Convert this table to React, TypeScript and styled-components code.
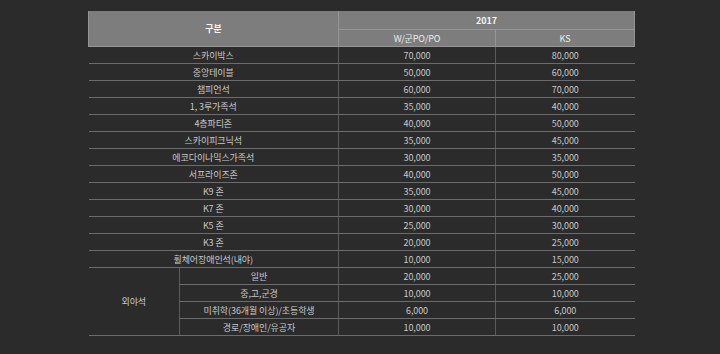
import styled, { createGlobalStyle } from 'styled-components';

const GlobalStyle = createGlobalStyle`
  html,
  body {
    margin: 0;
    padding: 0;
    background: #2b2b2b;
  }
`;

const Page = styled.div`
  width: 720px;
  height: 354px;
  padding: 11px 0 0 88px;
  box-sizing: border-box;
  background: #2b2b2b;
  font-family: 'Noto Sans CJK KR', 'Noto Sans', sans-serif;
`;

const PriceTable = styled.table`
  width: 546px;
  border-collapse: collapse;
  table-layout: fixed;
  font-size: 9px;
  line-height: 1;
  letter-spacing: -0.1px;
`;

const Head = styled.th<{ $h: number }>`
  height: ${({ $h }) => $h}px;
  padding: 0;
  background: #7d7d7d;
  color: #f4f4f4;
  font-weight: 700;
  text-align: center;
  border: 1px solid #959595;
  border-top: none;
`;

const SubHead = styled(Head)`
  font-weight: 400;
  color: #ececec;
`;

const Row = styled.tr`
  height: 17px;
`;

const Cell = styled.td`
  padding: 0;
  color: #c8c8c8;
  text-align: center;
  border-bottom: 1px solid #6c6c6c;
  border-left: 1px solid #5a5a5a;

  &:first-child {
    border-left: none;
  }
`;

type Price = [string, string, string];

const rows: Price[] = [
  ['스카이박스', '70,000', '80,000'],
  ['중앙테이블', '50,000', '60,000'],
  ['챔피언석', '60,000', '70,000'],
  ['1, 3루가족석', '35,000', '40,000'],
  ['4층파티존', '40,000', '50,000'],
  ['스카이피크닉석', '35,000', '45,000'],
  ['에코다이나믹스가족석', '30,000', '35,000'],
  ['서프라이즈존', '40,000', '50,000'],
  ['K9 존', '35,000', '45,000'],
  ['K7 존', '30,000', '40,000'],
  ['K5 존', '25,000', '30,000'],
  ['K3 존', '20,000', '25,000'],
  ['휠체어장애인석(내야)', '10,000', '15,000'],
];

const outfield: Price[] = [
  ['일반', '20,000', '25,000'],
  ['중,고,군경', '10,000', '10,000'],
  ['미취학(36개월 이상)/초등학생', '6,000', '6,000'],
  ['경로/장애인/유공자', '10,000', '10,000'],
];

export default function App() {
  return (
    <Page>
      <GlobalStyle />
      <PriceTable>
        <colgroup>
          <col style={{ width: 91 }} />
          <col style={{ width: 159 }} />
          <col style={{ width: 157 }} />
          <col style={{ width: 139 }} />
        </colgroup>
        <thead>
          <tr>
            <Head $h={18} colSpan={2} rowSpan={2}>
              구분
            </Head>
            <Head $h={18} colSpan={2}>
              2017
            </Head>
          </tr>
          <tr>
            <SubHead $h={16}>W/군PO/PO</SubHead>
            <SubHead $h={16}>KS</SubHead>
          </tr>
        </thead>
        <tbody>
          {rows.map(([name, a, b]) => (
            <Row key={name}>
              <Cell colSpan={2}>{name}</Cell>
              <Cell>{a}</Cell>
              <Cell>{b}</Cell>
            </Row>
          ))}
          {outfield.map(([name, a, b], i) => (
            <Row key={name}>
              {i === 0 && <Cell rowSpan={outfield.length}>외야석</Cell>}
              <Cell style={i === 0 ? undefined : { borderLeft: '1px solid #5a5a5a' }}>{name}</Cell>
              <Cell>{a}</Cell>
              <Cell>{b}</Cell>
            </Row>
          ))}
        </tbody>
      </PriceTable>
    </Page>
  );
}
